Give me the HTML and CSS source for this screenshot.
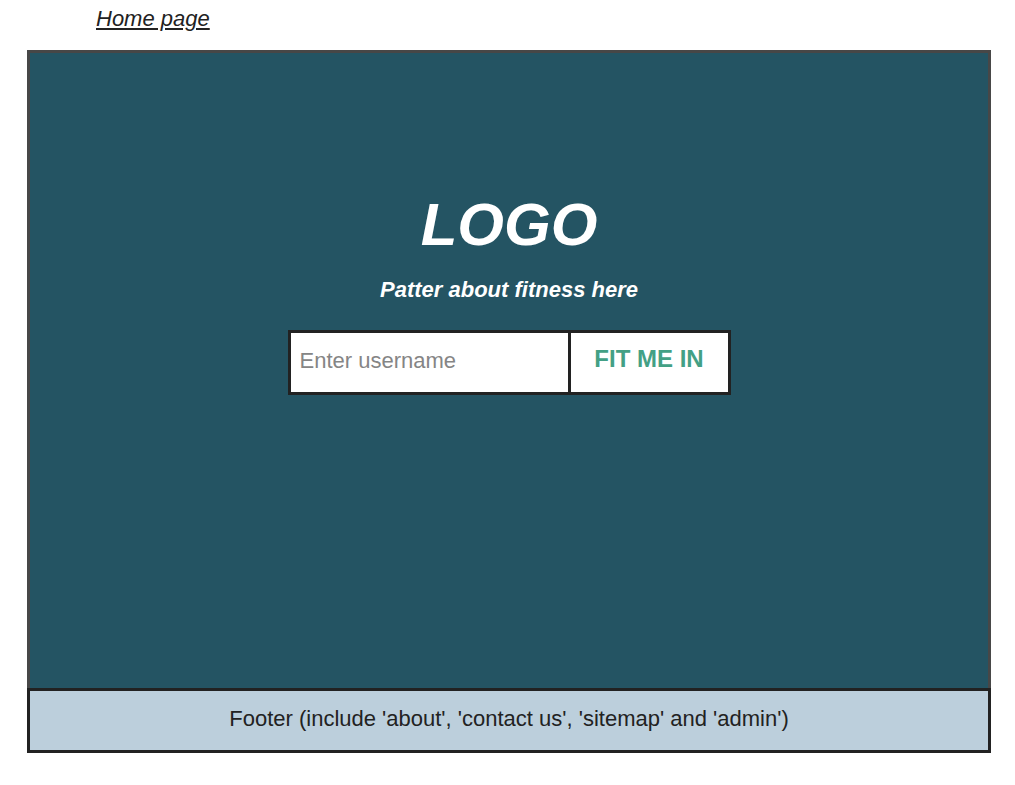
FILE: index.html
```html
<!DOCTYPE html>
<html>
<head>
<meta charset="utf-8">
<link rel="stylesheet" href="styles.css">
</head>
<body>
<header class="top">
  <a class="home-link" href="#">Home page</a>
</header>
<div class="frame">
  <main class="hero">
    <h1 class="logo">LOGO</h1>
    <p class="tagline">Patter about fitness here</p>
    <form class="signup">
      <input class="username" type="text" placeholder="Enter username">
      <button class="fit-btn" type="button">FIT ME IN</button>
    </form>
  </main>
  <footer class="footer">Footer (include 'about', 'contact us', 'sitemap' and 'admin')</footer>
</div>
</body>
</html>
```

FILE: styles.css
```css
html, body {
  margin: 0;
  padding: 0;
  background: #ffffff;
  font-family: "Liberation Sans", Arial, sans-serif;
}

.top {
  padding: 6px 0 0 96px;
  height: 50px;
  box-sizing: border-box;
}

.home-link {
  font-size: 22px;
  line-height: 25px;
  font-style: italic;
  color: #222222;
  text-decoration: underline;
}

.frame {
  margin-left: 27px;
  width: 964px;
}

.hero {
  box-sizing: border-box;
  height: 638px;
  background: #245463;
  border: 3px solid #474747;
  border-bottom: none;
  display: flex;
  flex-direction: column;
  align-items: center;
  padding-top: 142px;
}

.logo {
  margin: 0;
  font-size: 60px;
  line-height: 60px;
  font-weight: bold;
  font-style: italic;
  color: #ffffff;
}

.tagline {
  margin: 22px 0 0 0;
  font-size: 22px;
  line-height: 25px;
  font-weight: bold;
  font-style: italic;
  color: #ffffff;
}

.signup {
  margin: 28px 0 0 0;
  display: flex;
  border: 3px solid #222222;
  background: #ffffff;
  height: 65px;
  box-sizing: border-box;
}

.username {
  width: 277px;
  height: 59px;
  box-sizing: border-box;
  border: none;
  outline: none;
  margin: 0;
  padding: 0 0 3px 9px;
  font-family: "Liberation Sans", Arial, sans-serif;
  font-size: 22px;
  color: #222222;
  background: #ffffff;
}

.username::placeholder {
  color: #858585;
  opacity: 1;
}

.fit-btn {
  width: 160px;
  height: 59px;
  box-sizing: border-box;
  margin: 0;
  border: none;
  border-left: 3px solid #222222;
  background: #ffffff;
  padding: 0 0 7px 0;
  font-family: "Liberation Sans", Arial, sans-serif;
  font-size: 24px;
  font-weight: bold;
  color: #43a085;
}

.footer {
  box-sizing: border-box;
  height: 65px;
  border: 3px solid #222222;
  background: #bccfdc;
  text-align: center;
  font-size: 22px;
  line-height: 25px;
  padding-top: 15px;
  color: #222222;
}
```
